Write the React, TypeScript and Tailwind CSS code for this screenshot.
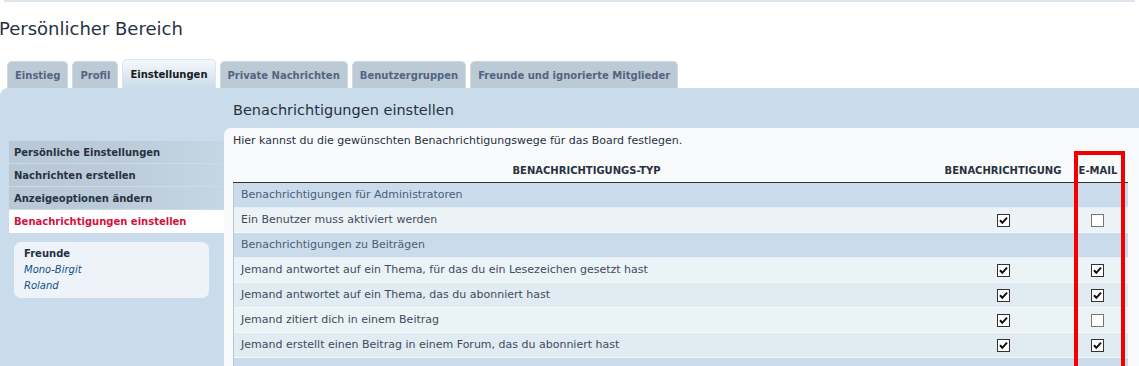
const tabs = [
  { label: "Einstieg" },
  { label: "Profil" },
  { label: "Einstellungen", active: true },
  { label: "Private Nachrichten" },
  { label: "Benutzergruppen" },
  { label: "Freunde und ignorierte Mitglieder" },
];

const menu = [
  { label: "Persönliche Einstellungen" },
  { label: "Nachrichten erstellen" },
  { label: "Anzeigeoptionen ändern" },
  { label: "Benachrichtigungen einstellen", active: true },
];

type Row =
  | { section: string }
  | { label: string; notify: boolean; email: boolean; alt?: boolean };

const rows: Row[] = [
  { section: "Benachrichtigungen für Administratoren" },
  { label: "Ein Benutzer muss aktiviert werden", notify: true, email: false },
  { section: "Benachrichtigungen zu Beiträgen" },
  { label: "Jemand antwortet auf ein Thema, für das du ein Lesezeichen gesetzt hast", notify: true, email: true },
  { label: "Jemand antwortet auf ein Thema, das du abonniert hast", notify: true, email: true, alt: true },
  { label: "Jemand zitiert dich in einem Beitrag", notify: true, email: false },
  { label: "Jemand erstellt einen Beitrag in einem Forum, das du abonniert hast", notify: true, email: true, alt: true },
  { section: "" },
];

function Box({ checked }: { checked: boolean }) {
  return (
    <svg width="13" height="13" viewBox="0 0 13 13" className="block">
      <rect x="0.5" y="0.5" width="12" height="12" fill="#fff" stroke={checked ? "#333" : "#777"} />
      {checked && <path d="M3 6.3 L5.3 8.8 L10 3.6" fill="none" stroke="#111" strokeWidth="2" />}
    </svg>
  );
}

export default function App() {
  return (
    <div className="relative w-[1139px] h-[366px] overflow-hidden bg-white text-[#28313f] font-['DejaVu_Sans',Verdana,sans-serif]">
      <div className="h-[2px] mx-[4px] bg-[#dde6ee]" />
      <h2 className="pt-[15px] text-[18px] leading-[24px] text-[#28313f] -ml-[1px]">Persönlicher Bereich</h2>

      <div className="flex items-end gap-[4px] pl-[7px] mt-[18px] h-[29px]">
        {tabs.map((t) =>
          t.active ? (
            <div
              key={t.label}
              className="h-[29px] px-[7px] flex items-center rounded-t-[5px] bg-gradient-to-b from-[#f6f9fc] to-[#cadceb] border border-b-0 border-[#dbe5ee] text-[10px] font-bold text-[#1a1a1a]"
            >
              {t.label}
            </div>
          ) : (
            <div
              key={t.label}
              className="h-[27px] px-[7px] flex items-center rounded-t-[5px] bg-[#bccad6] border border-b-0 border-[#cfd9e2] text-[10px] font-bold text-[#536482]"
            >
              {t.label}
            </div>
          )
        )}
      </div>

      <div className="flex bg-[#cadceb] rounded-tl-[8px] h-[278px]">
        <div className="w-[224px] shrink-0 pl-[9px] pt-[53px]">
          <div className="flex flex-col gap-[1px]">
            {menu.map((m) =>
              m.active ? (
                <div key={m.label} className="h-[23px] pl-[5px] flex items-center bg-white text-[10px] font-bold text-[#d31141]">
                  {m.label}
                </div>
              ) : (
                <div
                  key={m.label}
                  className="h-[22px] pl-[5px] flex items-center bg-gradient-to-r from-[#b8c8d7] via-[#bccbd9] to-[#c6d6e5] text-[10px] font-bold text-[#28313f]"
                >
                  {m.label}
                </div>
              )
            )}
          </div>
          <div className="mt-[9px] ml-[5px] w-[195px] rounded-[7px] bg-[#edf3f8] pl-[10px] pt-[4px] pb-[4px] text-[11px] leading-[16px]">
            <div className="font-bold text-[10px] text-[#28313f]">Freunde</div>
            <div className="italic text-[10px] text-[#105289]">Mono-Birgit</div>
            <div className="italic text-[10px] text-[#105289]">Roland</div>
          </div>
        </div>

        <div className="flex-1 flex flex-col min-w-0">
          <h3 className="shrink-0 pl-[9px] pt-[12px] h-[40px] text-[14.5px] leading-[20px] text-[#28313f]">Benachrichtigungen einstellen</h3>
          <div className="flex-1 bg-[#f9fafb] rounded-tl-[7px] pl-[9px] pr-[11px] pt-[6px]">
            <p className="text-[11px] leading-[14px] text-[#28313f]">
              Hier kannst du die gewünschten Benachrichtigungswege für das Board festlegen.
            </p>
            <div className="mt-[11px]">
              <div className="flex h-[24px] items-center border-b border-[#333] text-[10px] font-bold text-[#28313f] uppercase">
                <div className="w-[707px] text-center">Benachrichtigungs-Typ</div>
                <div className="w-[126px] text-center">Benachrichtigung</div>
                <div className="flex-1 text-center pl-[2px]">E-Mail</div>
              </div>
              <div className="border-l border-[#b9c7d4]">
                {rows.map((r, i) =>
                  "section" in r ? (
                    <div key={i} className="h-[25px] flex items-center pl-[7px] bg-[#cadceb] text-[11px] text-[#4c5d77] border-b border-[#e6eef5]">
                      {r.section}
                    </div>
                  ) : (
                    <div
                      key={i}
                      className={`h-[25px] flex items-center text-[11px] text-[#3f4a5c] border-b border-[#f5f8fa] ${r.alt ? "bg-[#e1ebf2]" : "bg-[#ecf3f7]"}`}
                    >
                      <div className="w-[706px] pl-[7px]">{r.label}</div>
                      <div className="w-[126px] flex justify-center">
                        <Box checked={r.notify} />
                      </div>
                      <div className="flex-1 flex justify-center">
                        <Box checked={r.email} />
                      </div>
                    </div>
                  )
                )}
              </div>
            </div>
          </div>
        </div>
      </div>

      <div className="absolute left-[1074px] top-[151px] w-[51px] h-[220px] border-[4px] border-[#f20000]" />
    </div>
  );
}
